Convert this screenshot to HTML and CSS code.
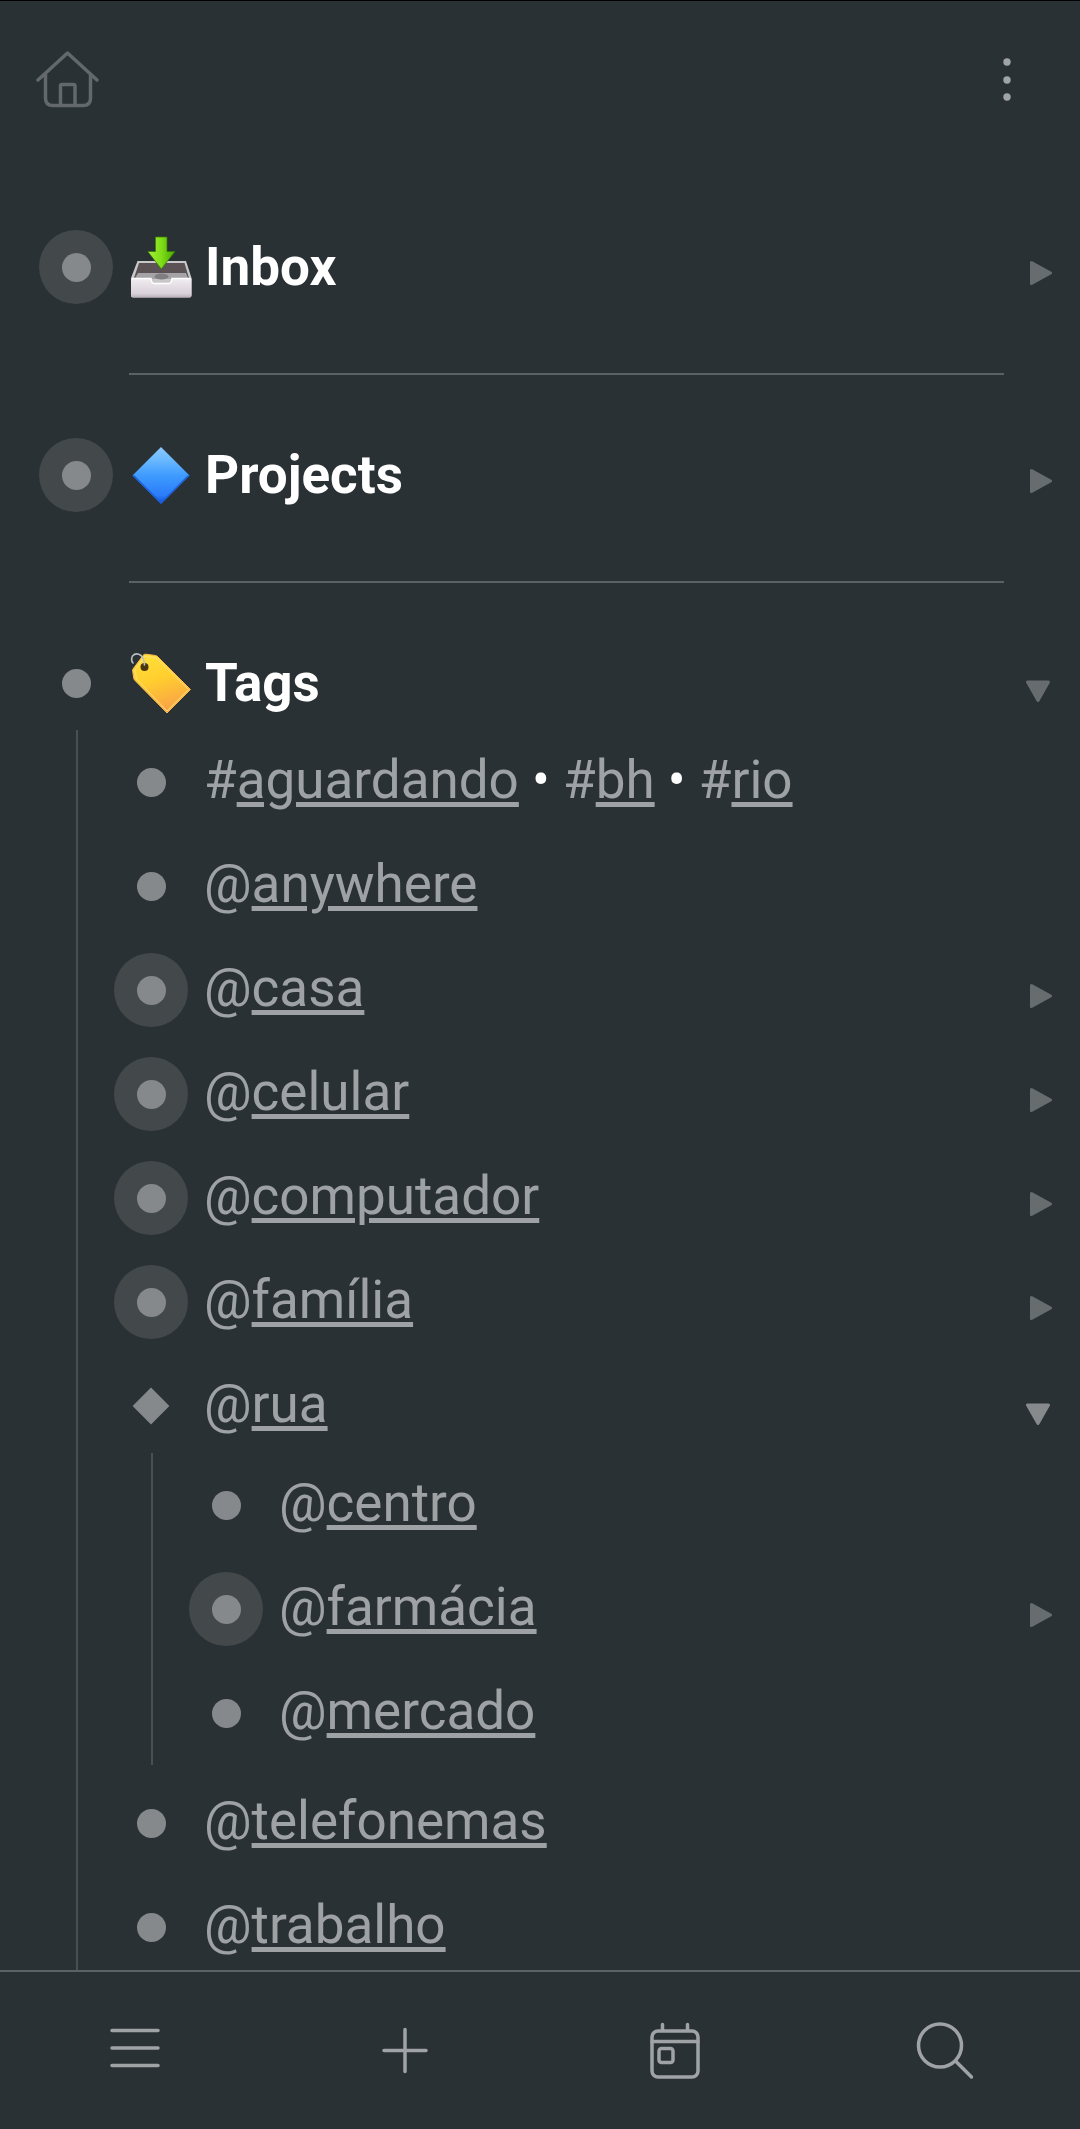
FILE: index.html
```html
<!DOCTYPE html>
<html lang="pt-BR">
<head>
    <meta charset="UTF-8">
    <meta name="viewport" content="width=device-width, initial-scale=1.0">
    <title>Home</title>
    <link rel="stylesheet" href="styles.css">
</head>
<body>

<!-- Shared icons -->
<svg class="sprite" aria-hidden="true">
    <symbol id="arrow-right" viewBox="0 0 26 40">
        <path d="M5.500 15.500 L24.500 26 L5.500 36.500 Z" fill="currentColor" stroke="currentColor" stroke-width="3" stroke-linejoin="round"/>
    </symbol>
    <symbol id="arrow-down" viewBox="0 0 26 40">
        <path d="M1.500 19 H22.500 L12 37.500 Z" fill="currentColor" stroke="currentColor" stroke-width="3" stroke-linejoin="round"/>
    </symbol>
</svg>

<div class="app">
    <header class="top-bar">
        <a class="icon-link home" href="#" aria-label="Home">
            <svg width="64" height="60" viewBox="0 0 64 60">
                <path d="M3 30 L32.500 3 L62 30 M10.500 24 V48 Q10.500 55.500 18 55.500 H48 Q55.500 55.500 55.500 48 V24 M25.500 55 V36 Q25.500 34.500 27 34.500 H38 Q40 34.500 40 36 V55"/>
            </svg>
        </a>
        <button class="icon-button more" type="button" aria-label="Menu">
            <svg width="8" height="44" viewBox="0 0 8 44">
                <circle cx="4" cy="4" r="3.700"/>
                <circle cx="4" cy="22" r="3.700"/>
                <circle cx="4" cy="39" r="3.700"/>
            </svg>
        </button>
    </header>

    <main class="outline">
        <ul class="tree">
            <li>
                <div class="row title">
                    <a class="bullet closed" href="#" aria-label="Inbox"></a>
                    <svg class="emoji" viewBox="0 0 64 64" aria-hidden="true">
                        <defs>
                            <linearGradient id="tray" x1="0" y1="0" x2="0" y2="1">
                                <stop offset="0" stop-color="#f1edf1"/>
                                <stop offset="0.800" stop-color="#d9d0d9"/>
                                <stop offset="1" stop-color="#b8adb7"/>
                            </linearGradient>
                            <linearGradient id="green" x1="0" y1="0" x2="1" y2="0">
                                <stop offset="0" stop-color="#a8ee3c"/>
                                <stop offset="0.500" stop-color="#7fdd16"/>
                                <stop offset="1" stop-color="#47a800"/>
                            </linearGradient>
                        </defs>
                        <path d="M8.500 26 H57 L62.500 43 V60.500 Q62.500 62.500 60.500 62.500 H4 Q2 62.500 2 60.500 V43 Z" fill="#c9c7c9"/>
                        <path d="M10 28 H55.500 L60 43 H5 Z" fill="#5a5254"/>
                        <path d="M9 38 H57 L59.500 44 H5.500 Z" fill="#a5a3a5"/>
                        <ellipse cx="32.500" cy="41.500" rx="7" ry="3" fill="#807e80"/>
                        <path d="M2 43.500 H22 Q22.500 48.500 25 48.500 H40 Q42.500 48.500 43 43.500 H62.500 V60.500 Q62.500 62.500 60.500 62.500 H4 Q2 62.500 2 60.500 Z" fill="url(#tray)"/>
                        <path d="M3 43.500 H22 Q22.500 48.500 25 48.500 H40 Q42.500 48.500 43 43.500 H61.500" fill="none" stroke="#ffffff" stroke-width="1.500"/>
                        <path d="M26.500 2 H38 V16.500 H46 L32.300 34 L18.800 16.500 H26.500 Z" fill="url(#green)" stroke="#347d06" stroke-width="0.700"/>
                    </svg>
                    <h2 class="label">Inbox</h2>
                    <button class="toggle" type="button" aria-label="Inbox">
                        <svg width="26" height="40"><use href="#arrow-right"/></svg>
                    </button>
                </div>
                <hr class="divider">
            </li>
            <li>
                <div class="row title">
                    <a class="bullet closed" href="#" aria-label="Projects"></a>
                    <svg class="emoji" viewBox="0 0 64 64" aria-hidden="true">
                        <defs>
                            <linearGradient id="blue" x1="0" y1="0" x2="0" y2="1">
                                <stop offset="0" stop-color="#8cc8fc"/>
                                <stop offset="0.220" stop-color="#6bb9ff"/>
                                <stop offset="0.500" stop-color="#3f9bff"/>
                                <stop offset="0.850" stop-color="#2a7cf8"/>
                                <stop offset="1" stop-color="#1050d8"/>
                            </linearGradient>
                        </defs>
                        <path d="M32 4 L60.500 32.500 L32 61 L3.500 32.500 Z" fill="url(#blue)"/>
                        <path d="M4.500 32.500 L32 60 L59.500 32.500" fill="none" stroke="#1c5fd8" stroke-width="1.500"/>
                    </svg>
                    <h2 class="label">Projects</h2>
                    <button class="toggle" type="button" aria-label="Projects">
                        <svg width="26" height="40"><use href="#arrow-right"/></svg>
                    </button>
                </div>
                <hr class="divider">
            </li>
            <li>
                <div class="row title">
                    <a class="bullet" href="#" aria-label="Tags"></a>
                    <svg class="emoji" viewBox="0 0 64 64" aria-hidden="true">
                        <defs>
                            <linearGradient id="yellow" x1="0" y1="0" x2="0.300" y2="1">
                                <stop offset="0" stop-color="#ffe23c"/>
                                <stop offset="0.500" stop-color="#ffcf2e"/>
                                <stop offset="1" stop-color="#f9a545"/>
                            </linearGradient>
                        </defs>
                        <path d="M4 18 L14 4.500 Q15 3 17 3.200 L26.500 4.500 Q28 4.800 29 6 L61.500 38.500 L38 62 L6 29.500 Q5 28.500 4.700 27 L3.700 20 Q3.500 19 4 18 Z" fill="url(#yellow)" stroke="#fbb84c" stroke-width="1"/>
                        <path d="M6 19 L15.500 5.500 L26.500 6.500 L59.500 38.500 L38 60 L7.500 28 Z" fill="none" stroke="#ffe07a" stroke-width="1"/>
                        <circle cx="15.500" cy="16" r="4" fill="#4a350f"/>
                        <path d="M4 12 Q1.500 9.500 3.500 5 Q7 1 12 4.500 Q15.500 8 15.500 14" fill="none" stroke="#b9bec0" stroke-width="1.600" stroke-linecap="round"/>
                    </svg>
                    <h2 class="label">Tags</h2>
                    <button class="toggle" type="button" aria-label="Tags">
                        <svg width="26" height="40"><use href="#arrow-down"/></svg>
                    </button>
                </div>

                <ul class="children">
                    <li class="row">
                        <a class="bullet" href="#" aria-label="#aguardando"></a>
                        <p class="label"><a class="tag" href="#">#<span>aguardando</span></a> • <a class="tag" href="#">#<span>bh</span></a> • <a class="tag" href="#">#<span>rio</span></a></p>
                    </li>
                    <li class="row">
                        <a class="bullet" href="#" aria-label="@anywhere"></a>
                        <p class="label"><a class="tag" href="#">@<span>anywhere</span></a></p>
                    </li>
                    <li class="row">
                        <a class="bullet closed" href="#" aria-label="@casa"></a>
                        <p class="label"><a class="tag" href="#">@<span>casa</span></a></p>
                        <button class="toggle" type="button" aria-label="@casa">
                            <svg width="26" height="40"><use href="#arrow-right"/></svg>
                        </button>
                    </li>
                    <li class="row">
                        <a class="bullet closed" href="#" aria-label="@celular"></a>
                        <p class="label"><a class="tag" href="#">@<span>celular</span></a></p>
                        <button class="toggle" type="button" aria-label="@celular">
                            <svg width="26" height="40"><use href="#arrow-right"/></svg>
                        </button>
                    </li>
                    <li class="row">
                        <a class="bullet closed" href="#" aria-label="@computador"></a>
                        <p class="label"><a class="tag" href="#">@<span>computador</span></a></p>
                        <button class="toggle" type="button" aria-label="@computador">
                            <svg width="26" height="40"><use href="#arrow-right"/></svg>
                        </button>
                    </li>
                    <li class="row">
                        <a class="bullet closed" href="#" aria-label="@família"></a>
                        <p class="label"><a class="tag" href="#">@<span>família</span></a></p>
                        <button class="toggle" type="button" aria-label="@família">
                            <svg width="26" height="40"><use href="#arrow-right"/></svg>
                        </button>
                    </li>
                    <li>
                        <div class="row">
                            <a class="bullet diamond" href="#" aria-label="@rua"></a>
                            <p class="label"><a class="tag" href="#">@<span>rua</span></a></p>
                            <button class="toggle bright" type="button" aria-label="@rua">
                                <svg width="26" height="40"><use href="#arrow-down"/></svg>
                            </button>
                        </div>
                        <ul class="children">
                            <li class="row">
                                <a class="bullet" href="#" aria-label="@centro"></a>
                                <p class="label"><a class="tag" href="#">@<span>centro</span></a></p>
                            </li>
                            <li class="row">
                                <a class="bullet closed" href="#" aria-label="@farmácia"></a>
                                <p class="label"><a class="tag" href="#">@<span>farmácia</span></a></p>
                                <button class="toggle" type="button" aria-label="@farmácia">
                                    <svg width="26" height="40"><use href="#arrow-right"/></svg>
                                </button>
                            </li>
                            <li class="row">
                                <a class="bullet" href="#" aria-label="@mercado"></a>
                                <p class="label"><a class="tag" href="#">@<span>mercado</span></a></p>
                            </li>
                        </ul>
                    </li>
                    <li class="row">
                        <a class="bullet" href="#" aria-label="@telefonemas"></a>
                        <p class="label"><a class="tag" href="#">@<span>telefonemas</span></a></p>
                    </li>
                    <li class="row">
                        <a class="bullet" href="#" aria-label="@trabalho"></a>
                        <p class="label"><a class="tag" href="#">@<span>trabalho</span></a></p>
                    </li>
                </ul>
            </li>
        </ul>
    </main>

    <!-- Bottom toolbar -->
    <nav class="bottom-bar">
        <button class="icon-button" type="button" aria-label="Menu">
            <svg width="58" height="58" viewBox="0 0 58 58">
                <path d="M6 8.500 H52 M6 26 H52 M6 43.500 H52"/>
            </svg>
        </button>
        <button class="icon-button" type="button" aria-label="Add">
            <svg width="58" height="58" viewBox="0 0 58 58">
                <path d="M29 7.500 V49.500 M8 28.500 H50"/>
            </svg>
        </button>
        <button class="icon-button" type="button" aria-label="Calendar">
            <svg width="58" height="58" viewBox="0 0 58 58">
                <rect x="6" y="9" width="46" height="46" rx="6"/>
                <path d="M6 19.500 H52 M16.500 2.500 V8 M41.500 2.500 V8"/>
                <rect x="13" y="26.500" width="14" height="14" rx="2.500"/>
            </svg>
        </button>
        <button class="icon-button" type="button" aria-label="Search">
            <svg width="58" height="58" viewBox="0 0 58 58">
                <circle cx="24" cy="23.500" r="21.500"/>
                <path d="M39.500 39 L55.500 55"/>
            </svg>
        </button>
    </nav>
</div>

</body>
</html>
```
FILE: styles.css
```css
* {
    box-sizing: border-box;
}

body {
    margin: 0;
    font-family: Roboto, sans-serif;
    font-size: 53px;
    line-height: 64px;
    color: #ffffff;
    background-color: #2a3135;
}

h2, p, ul {
    margin: 0;
    padding: 0;
    font-size: inherit;
}

ul {
    list-style: none;
}

button {
    padding: 0;
    border: none;
    background: none;
    cursor: pointer;
}

svg {
    display: block;
}

.sprite {
    display: none;
}

.app {
    display: flex;
    flex-direction: column;
    height: 100vh;
}

/* Top bar */
.top-bar {
    display: flex;
    justify-content: space-between;
    align-items: center;
    height: 159px;
    padding: 0 69px 0 35px;
    border-top: 1px solid #000000;
}

.home {
    color: #62686b;
}

.more {
    color: #a0a4a7;
}

.more svg {
    fill: currentColor;
}

.home svg,
.bottom-bar svg {
    fill: none;
    stroke: currentColor;
    stroke-width: 3.5px;
    stroke-linecap: round;
    stroke-linejoin: round;
}

/* Outline */
.outline {
    flex: 1;
    min-height: 0;
    padding-top: 56px;
    overflow-y: auto;
    scrollbar-width: none;
}

.tree {
    padding-left: 39px;
}

.row {
    display: flex;
    align-items: center;
    height: 104px;
    padding-right: 28px;
}

.bullet {
    display: flex;
    flex: none;
    justify-content: center;
    align-items: center;
    width: 74px;
    height: 74px;
    margin-right: 16px;
    border-radius: 50%;
}

.bullet::before {
    content: "";
    width: 29px;
    height: 29px;
    border-radius: 50%;
    background-color: #86898c;
}

.bullet.closed {
    background-color: #43484b;
}

.bullet.diamond::before {
    width: 26px;
    height: 26px;
    border-radius: 0;
    transform: rotate(45deg);
}

.emoji {
    flex: none;
    width: 64px;
    height: 64px;
    margin-right: 12px;
}

.label {
    flex: 1;
    padding-bottom: 4px;
}

.title .label {
    padding-bottom: 0;
    font-weight: 700;
}

.tag {
    color: #9ea2a4;
    text-decoration: none;
}

.tag span {
    text-decoration: underline;
    text-decoration-thickness: 5px;
    text-underline-offset: 4px;
}

.toggle {
    color: #676c6f;
}

.toggle.bright {
    color: #868a8d;
}

.divider {
    height: 2px;
    margin: 54px 76px 48px 90px;
    border: none;
    background-color: #5b6164;
}

.children {
    margin: -5px 0 6px 37px;
    padding-left: 36px;
    border-left: 2px solid #4a4f52;
}

/* Bottom bar */
.bottom-bar {
    display: grid;
    grid-template-columns: repeat(4, 1fr);
    height: 159px;
    border-top: 2px solid #5b6164;
    color: #9fa3a5;
}

.bottom-bar .icon-button {
    display: flex;
    justify-content: center;
    align-items: center;
    color: inherit;
}
```
